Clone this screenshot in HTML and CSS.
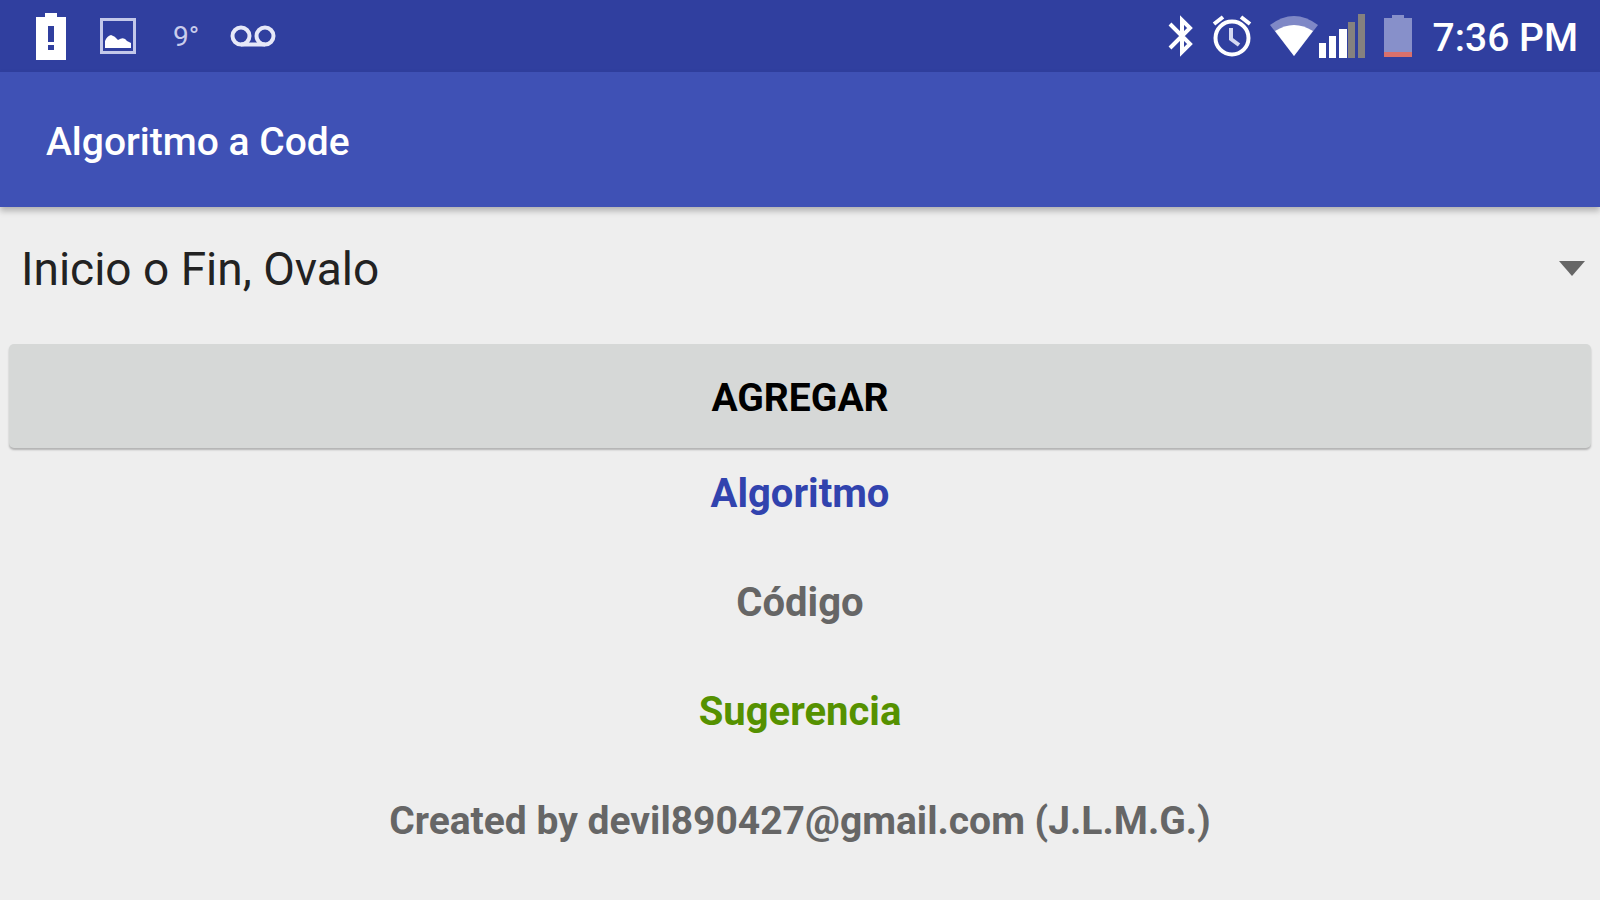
FILE: index.html
```html
<!DOCTYPE html>
<html lang="es">
<head>
  <meta charset="UTF-8">
  <meta name="viewport" content="width=device-width, initial-scale=1">
  <title>Algoritmo a Code</title>
  <link rel="stylesheet" href="styles.css">
</head>
<body>
  <!-- STATUS BAR -->
  <div class="status-bar">
    <div class="status-left">
      <svg width="30" height="47" viewBox="0 0 30 47">
        <path fill="#fff" fill-rule="evenodd" d="M9 0h12v4h9v43H0V4h9zM12 13v16h6V13zM12 32v5h6v-5z"/>
      </svg>
      <svg width="36" height="36" viewBox="0 0 36 36">
        <rect x="1.5" y="1.5" width="33" height="33" fill="none" stroke="#c3c8ea" stroke-width="3"/>
        <path fill="#fff" d="M5 30v-7q2-5 6-6 4 1 7 5 6-4 9 1l4 2v5z"/>
      </svg>
      <span class="temp">9°</span>
      <svg width="46" height="22" viewBox="0 0 46 22">
        <g fill="none" stroke="#e6e8f8" stroke-width="4">
          <circle cx="11" cy="11" r="8.5"/>
          <circle cx="35" cy="11" r="8.5"/>
          <path d="M11 19.5h24"/>
        </g>
      </svg>
    </div>
    <div class="status-right">
      <svg width="26" height="42" viewBox="0 0 26 42">
        <path fill="none" stroke="#fff" stroke-width="4" d="M2 9l20 20-8 8V5l8 8L2 33"/>
      </svg>
      <svg width="40" height="42" viewBox="0 0 40 42">
        <g fill="none" stroke="#fff">
          <circle cx="20" cy="23" r="16.5" stroke-width="4"/>
          <path stroke-width="4" d="M2 9l9-7M38 9l-9-7"/>
          <path stroke="#d5d9f2" stroke-width="4" d="M19 13v11l8 6"/>
        </g>
      </svg>
      <div class="signal">
        <svg width="48" height="44" viewBox="0 0 48 44">
          <path fill="#7f88c6" d="M0 11Q24-7 48 11L24 42z"/>
          <path fill="#fff" d="M5 17Q24 5 43 17L24 42z"/>
        </svg>
        <svg width="48" height="44" viewBox="0 0 48 44">
          <path fill="#fff" d="M1 29h7v15H1zM11 22h7v22h-7zM21 15h8v29h-8z"/>
          <path fill="#85817f" d="M30 8h7v36h-7zM40 0h7v44h-7z"/>
        </svg>
      </div>
      <svg width="28" height="42" viewBox="0 0 28 42">
        <path fill="#8790ca" d="M8 0h12v3h8v35H0V3h8z"/>
        <path fill="#d9706c" d="M0 37h28v5H0z"/>
      </svg>
      <span class="clock">7:36 PM</span>
    </div>
  </div>

  <header class="app-bar">
    <h1>Algoritmo a Code</h1>
  </header>

  <main>
    <div class="spinner">
      <select id="shape" aria-label="Figura">
        <option>Inicio o Fin, Ovalo</option>
      </select>
      <svg width="26" height="16" viewBox="0 0 26 16">
        <path fill="#666" d="M0 0h26L13 15z"/>
      </svg>
    </div>
    <button type="button" class="add-button">AGREGAR</button>

    <div class="sections">
      <h2 class="algorithm">Algoritmo</h2>
      <h2>Código</h2>
      <h2 class="hint">Sugerencia</h2>
      <p>Created by devil890427@gmail.com (J.L.M.G.)</p>
    </div>
  </main>
</body>
</html>
```
FILE: styles.css
```css
* {
  box-sizing: border-box;
}

body {
  margin: 0;
  background-color: #eeeeee;
  color: #666666;
  font-family: Roboto, "Liberation Sans", sans-serif;
  font-size: 39px;
}

svg {
  display: block;
}

h1, h2, p {
  margin: 0;
  font-size: 39px;
  line-height: 48px;
}

h2 {
  font-size: 40px;
}

/* status bar */
.status-bar {
  display: flex;
  justify-content: space-between;
  align-items: center;
  height: 72px;
  padding: 0 22px 0 36px;
  background-color: #303f9f;
  color: #fff;
}

.status-left {
  display: flex;
  align-items: center;
  gap: 34px;
}

.status-right {
  display: flex;
  align-items: center;
  gap: 18px;
}

.signal {
  display: flex;
}

.temp {
  width: 26px;
  padding-left: 3px;
  font-size: 28px;
  color: #c9cdec;
}

.clock {
  padding: 4px 0 0 3px;
  font-weight: 500;
  line-height: 48px;
}

/* title bar */
.app-bar {
  padding: 46px 46px 41px;
  background-color: #3f51b5;
  color: #fff;
  box-shadow: 0 4px 6px rgba(0, 0, 0, 0.25);
}

.app-bar h1 {
  font-weight: 500;
}

main {
  padding: 10px 9px;
}

.spinner {
  display: grid;
  align-items: center;
}

.spinner select,
.spinner svg {
  grid-area: 1 / 1;
}

.spinner select {
  appearance: none;
  width: 100%;
  height: 104px;
  padding: 0 60px 0 12px;
  border: none;
  background: none;
  color: #222;
  font-family: inherit;
  font-size: 46px;
}

.spinner svg {
  justify-self: end;
  margin-right: 6px;
  pointer-events: none;
}

.add-button {
  display: block;
  width: 100%;
  height: 104px;
  margin-top: 23px;
  padding-top: 4px;
  border: none;
  border-radius: 5px;
  background-color: #d6d8d7;
  box-shadow: 0 2px 2px rgba(0, 0, 0, 0.25);
  color: #000;
  font-family: inherit;
  font-size: 39px;
  font-weight: bold;
  cursor: pointer;
}

.sections {
  display: grid;
  gap: 61px;
  margin-top: 22px;
  text-align: center;
}

.sections p {
  font-weight: bold;
}

.sections .algorithm {
  color: #3143ae;
}

.sections .hint {
  color: #559100;
}
```
